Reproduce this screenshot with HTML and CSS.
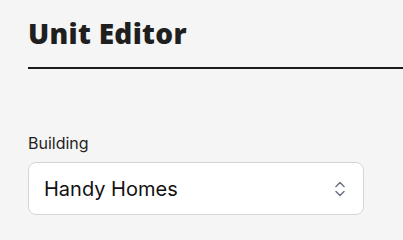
FILE: index.html
```html
<!DOCTYPE html>
<html>
<head>
<meta charset="utf-8">
<link rel="stylesheet" href="styles.css">
</head>
<body>
<div class="page">
  <header class="header">
    <h1 class="title">Unit Editor</h1>
  </header>
  <div class="field">
    <label class="label" for="building">Building</label>
    <div class="select">
      <span class="select-value">Handy Homes</span>
      <svg class="select-icon" width="12" height="18" viewBox="0 0 12 18" fill="none" stroke="#6b7280" stroke-width="1.5" stroke-linecap="round" stroke-linejoin="round">
        <path d="M2 6.5 L6 2.5 L10 6.5"/>
        <path d="M2 11.5 L6 15.5 L10 11.5"/>
      </svg>
    </div>
  </div>
</div>
</body>
</html>
```
FILE: styles.css
```css
html, body {
  margin: 0;
  padding: 0;
  background: #f5f5f5;
  overflow: hidden;
}
.page {
  padding: 0 0 0 28px;
  font-family: Inter, "Liberation Sans", sans-serif;
  color: #1a1a1a;
}
.header {
  padding-top: 14px;
  padding-bottom: 15px;
  border-bottom: 2px solid #1c1c1c;
}
.title {
  margin: 0;
  font-family: "Open Sans", Lato, sans-serif;
  font-weight: 800;
  font-size: 28px;
  line-height: 38px;
  color: #1f1f1f;
  letter-spacing: 0.3px;
}
.field {
  margin-top: 64px;
  width: 336px;
  display: flex;
  flex-direction: column;
}
.label {
  font-size: 16px;
  line-height: 20px;
  color: #1f1f1f;
}
.select {
  margin-top: 9px;
  height: 53px;
  box-sizing: border-box;
  background: #fff;
  border: 1px solid #d6d6d6;
  border-radius: 8px;
  display: flex;
  align-items: center;
  justify-content: space-between;
  padding: 0 17px 0 15px;
}
.select-value {
  font-size: 20px;
  color: #111;
}
.select-icon {
  display: block;
}
```
